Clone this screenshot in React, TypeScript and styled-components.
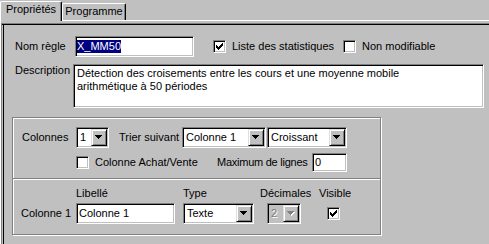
import * as React from "react"
import styled, { createGlobalStyle, css } from "styled-components"

const GlobalStyle = createGlobalStyle`
    html, body {
        margin: 0;
        padding: 0;
        background: #c0c0c0;
    }
    body {
        font-family: "Liberation Sans", Arial, sans-serif;
        font-size: 11px;
        line-height: 13px;
        color: #000;
    }
    * {
        box-sizing: border-box;
    }
`

// classic 2px sunken edge used by edits, combos and check boxes
const sunken = css`
    border: 1px solid;
    border-color: #808080 #fff #fff #808080;
    box-shadow: inset 1px 1px 0 #000, inset -1px -1px 0 #c0c0c0;
`

const Window = styled.div`
    width: 489px;
    height: 244px;
    display: flex;
    flex-direction: column;
    overflow: hidden;
`

const TabBar = styled.div`
    display: flex;
    align-items: flex-end;
    height: 20px;
`

const Tab = styled.div<{ $active?: boolean; $w: number }>`
    position: relative;
    z-index: ${p => (p.$active ? 1 : 0)};
    width: ${p => p.$w}px;
    height: ${p => (p.$active ? 20 : 17)}px;
    margin-bottom: ${p => (p.$active ? -1 : 0)}px;
    display: flex;
    justify-content: center;
    padding-top: 1px;
    background: #c0c0c0;
    border-top: 1px solid #fff;
    border-left: 1px solid #fff;
    border-right: 1px solid #000;
    border-radius: 2px 2px 0 0;
    box-shadow: inset -1px 0 0 #808080;
    white-space: nowrap;
`

const TabPage = styled.div`
    flex: 1;
    display: flex;
    border-top: 1px solid #fff;
    border-left: 1px solid #fff;
    padding-top: 2px;
`

const Panel = styled.div`
    flex: 1;
    border-top: 1px solid #808080;
    border-left: 1px solid #808080;
    box-shadow: inset 0 1px 0 #000, inset 1px 0 0 #c0c0c0, inset 2px 0 0 #000;
    padding: 12px 0 0 10px;
`

const FormRow = styled.div<{ $top?: number; $align?: string }>`
    display: flex;
    align-items: ${p => p.$align || "center"};
    margin-top: ${p => p.$top || 0}px;
    padding-left: 3px;
`

const Label = styled.span<{ $w?: number; $left?: number; $tight?: boolean }>`
    flex-shrink: 0;
    width: ${p => (p.$w ? `${p.$w}px` : "auto")};
    margin-left: ${p => p.$left || 0}px;
    letter-spacing: ${p => (p.$tight ? "-0.25px" : "normal")};
    white-space: nowrap;
`

const TextBox = styled.div<{ $w: number; $h?: number }>`
    ${sunken};
    flex-shrink: 0;
    width: ${p => p.$w}px;
    height: ${p => p.$h || 21}px;
    display: flex;
    align-items: center;
    padding: 0 2px;
    background: #fff;
    white-space: nowrap;
    overflow: hidden;
`

const Selection = styled.span`
    margin-left: -1px;
    background: #000080;
    color: #fff;
`

const Memo = styled.div`
    ${sunken};
    width: 411px;
    height: 44px;
    padding: 2px 3px;
    background: #fff;
    white-space: pre-line;
`

const ComboBox = styled.div<{ $w: number; $disabled?: boolean }>`
    ${sunken};
    flex-shrink: 0;
    width: ${p => p.$w}px;
    height: 21px;
    display: flex;
    align-items: center;
    padding: 1px;
    background: ${p => (p.$disabled ? "#c0c0c0" : "#fff")};
`

const ComboValue = styled.span<{ $disabled?: boolean }>`
    flex: 1;
    padding-left: 2px;
    white-space: nowrap;
    overflow: hidden;
    color: ${p => (p.$disabled ? "#808080" : "#000")};
    text-shadow: ${p => (p.$disabled ? "1px 1px 0 #fff" : "none")};
`

const DropButton = styled.div`
    width: 16px;
    height: 17px;
    display: flex;
    align-items: center;
    justify-content: center;
    background: #c0c0c0;
    border: 1px solid;
    border-color: #dfdfdf #000 #000 #dfdfdf;
    box-shadow: inset 1px 1px 0 #fff, inset -1px -1px 0 #808080;
`

const Spacer = styled.span<{ $w: number }>`
    flex-shrink: 0;
    width: ${p => p.$w}px;
`

const CheckItem = styled.label<{ $w?: number; $left?: number }>`
    flex-shrink: 0;
    display: flex;
    align-items: center;
    gap: 6px;
    width: ${p => (p.$w ? `${p.$w}px` : "auto")};
    margin-left: ${p => p.$left || 0}px;
    white-space: nowrap;
`

const Box = styled.span`
    ${sunken};
    flex-shrink: 0;
    width: 13px;
    height: 13px;
    display: flex;
    align-items: center;
    justify-content: center;
    background: #fff;
`

const Group = styled.div`
    width: 369px;
    margin-top: 9px;
    border: 1px solid #808080;
    box-shadow: inset 1px 1px 0 #fff, 1px 1px 0 #fff;
`

const GroupSection = styled.div`
    padding: 9px 0 6px 9px;
`

const Etch = styled.div`
    height: 2px;
    border-top: 1px solid #808080;
    border-bottom: 1px solid #fff;
`

const GroupRow = styled.div<{ $top?: number }>`
    display: flex;
    align-items: center;
    margin-top: ${p => p.$top || 0}px;
`

const ColumnGrid = styled.div`
    display: grid;
    grid-template-columns: 55px 107px 77px 59px 1fr;
    grid-template-rows: 13px 21px;
    row-gap: 3px;
    align-items: center;
    padding: 7px 0 10px 8px;
`

const Cell = styled.div<{ $left?: number }>`
    display: flex;
    align-items: center;
    margin-left: ${p => p.$left || 0}px;
    white-space: nowrap;
`

const ARROW = "M0 0h7v1h-1v1h-1v1h-1v1h-1v-1h-1v-1h-1v-1h-1z"

const Arrow: React.FunctionComponent<{ disabled?: boolean }> = ({ disabled }) => (
    <svg width="8" height="5" viewBox="0 0 8 5">
        {disabled && <path d={ARROW} transform="translate(1 1)" fill="#fff" />}
        <path d={ARROW} fill={disabled ? "#808080" : "#000"} />
    </svg>
)

const CHECK = ["......#", ".....##", "#...###", "##.###.", "#####..", ".###...", "..#...."]

const CheckMark = () => (
    <svg width="7" height="7" viewBox="0 0 7 7" shapeRendering="crispEdges">
        {CHECK.map((row, y) =>
            row.split("").map((c, x) => (c === "#" ? <rect key={`${x}-${y}`} x={x} y={y} width="1" height="1" fill="#000" /> : null))
        )}
    </svg>
)

const Combo: React.FunctionComponent<{ value: string; w: number; disabled?: boolean }> = props => (
    <ComboBox $w={props.w} $disabled={props.disabled}>
        <ComboValue $disabled={props.disabled}>{props.value}</ComboValue>
        <DropButton>
            <Arrow disabled={props.disabled} />
        </DropButton>
    </ComboBox>
)

const Check: React.FunctionComponent<{ checked?: boolean }> = props => <Box>{props.checked && <CheckMark />}</Box>

export default function App() {
    return (
        <>
            <GlobalStyle />
            <Window>
                <TabBar>
                    <Tab $active $w={62}>Propriétés</Tab>
                    <Tab $w={64}>Programme</Tab>
                </TabBar>
                <TabPage>
                    <Panel>
                        <FormRow>
                            <Label $w={60}>Nom règle</Label>
                            <TextBox $w={119}>
                                <Selection>X_MM50</Selection>
                            </TextBox>
                            <CheckItem $w={130} $left={19}>
                                <Check checked />
                                Liste des statistiques
                            </CheckItem>
                            <CheckItem>
                                <Check />
                                Non modifiable
                            </CheckItem>
                        </FormRow>

                        <FormRow $top={7} $align="flex-start">
                            <Label $w={58}>Description</Label>
                            <Memo>
                                {"Détection des croisements entre les cours et une moyenne mobile\narithmétique à 50 périodes"}
                            </Memo>
                        </FormRow>

                        <Group>
                            <GroupSection>
                                <GroupRow>
                                    <Label $w={54}>Colonnes</Label>
                                    <Combo value="1" w={33} />
                                    <Label $w={63} $left={10}>
                                        Trier suivant
                                    </Label>
                                    <Combo value="Colonne 1" w={84} />
                                    <Spacer $w={1} />
                                    <Combo value="Croissant" w={80} />
                                </GroupRow>
                                <GroupRow $top={5}>
                                    <CheckItem $w={141} $left={54}>
                                        <Check />
                                        Colonne Achat/Vente
                                    </CheckItem>
                                    <Label $w={95} $tight>
                                        Maximum de lignes
                                    </Label>
                                    <TextBox $w={35} $h={19}>
                                        0
                                    </TextBox>
                                </GroupRow>
                            </GroupSection>
                            <Etch />
                            <ColumnGrid>
                                <span />
                                <Cell>Libellé</Cell>
                                <Cell>Type</Cell>
                                <Cell>Décimales</Cell>
                                <Cell>Visible</Cell>

                                <Cell>Colonne 1</Cell>
                                <Cell>
                                    <TextBox $w={99}>Colonne 1</TextBox>
                                </Cell>
                                <Cell>
                                    <Combo value="Texte" w={71} />
                                </Cell>
                                <Cell $left={7}>
                                    <Combo value="2" w={34} disabled />
                                </Cell>
                                <Cell $left={8}>
                                    <Check checked />
                                </Cell>
                            </ColumnGrid>
                        </Group>
                    </Panel>
                </TabPage>
            </Window>
        </>
    )
}
